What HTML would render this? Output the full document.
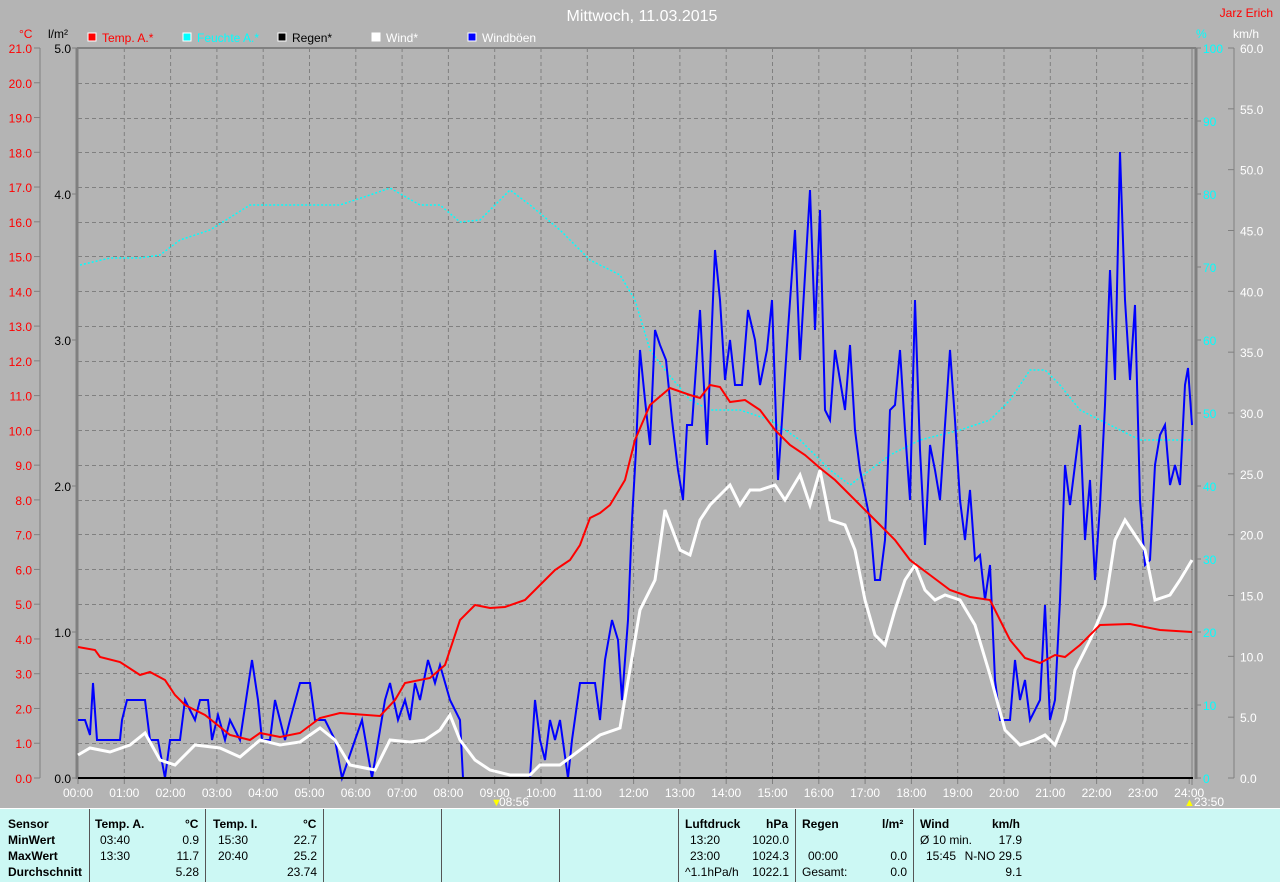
<!DOCTYPE html>
<html><head><meta charset="utf-8"><style>
body{margin:0;width:1280px;height:881px;overflow:hidden;background:#b4b4b4;font-family:"Liberation Sans",sans-serif;}
svg{position:absolute;left:0;top:0}
.tb{position:absolute;left:0;top:808px;width:1280px;height:73px;background:#ccf8f4;border-top:1px solid #fff;font-size:12px;}
.tb div{position:absolute;white-space:nowrap}
.b{font-weight:bold}
.sep{position:absolute;top:0;width:1px;height:73px;background:#555}
</style></head><body>
<svg width="1280" height="808" xmlns="http://www.w3.org/2000/svg" font-family="Liberation Sans, sans-serif" font-size="12">
<text x="642" y="21" fill="#fff" font-size="16" text-anchor="middle">Mittwoch, 11.03.2015</text>
<text x="1273" y="17" fill="#f00" text-anchor="end">Jarz Erich</text>
<text x="19" y="38" fill="#f00">°C</text>
<text x="48" y="38" fill="#000">l/m²</text>
<text x="1196" y="38" fill="#0ff">%</text>
<text x="1233" y="38" fill="#fff">km/h</text>
<rect x="88" y="33" width="8" height="8" fill="#f00" stroke="#fff"/><text x="102" y="42" fill="#f00">Temp. A.*</text>
<rect x="183" y="33" width="8" height="8" fill="#0ff" stroke="#fff"/><text x="197" y="42" fill="#0ff">Feuchte A.*</text>
<rect x="278" y="33" width="8" height="8" fill="#000" stroke="#fff"/><text x="292" y="42" fill="#000">Regen*</text>
<rect x="372" y="33" width="8" height="8" fill="#fff" stroke="#fff"/><text x="386" y="42" fill="#fff">Wind*</text>
<rect x="468" y="33" width="8" height="8" fill="#00f" stroke="#fff"/><text x="482" y="42" fill="#fff">Windböen</text>
<g id="grid" stroke="#808080" stroke-dasharray="4,3" stroke-width="1">
<line x1="78" x2="1193" y1="83.5" y2="83.5"/><line x1="78" x2="1193" y1="118.5" y2="118.5"/><line x1="78" x2="1193" y1="152.5" y2="152.5"/><line x1="78" x2="1193" y1="187.5" y2="187.5"/><line x1="78" x2="1193" y1="222.5" y2="222.5"/><line x1="78" x2="1193" y1="256.5" y2="256.5"/><line x1="78" x2="1193" y1="291.5" y2="291.5"/><line x1="78" x2="1193" y1="326.5" y2="326.5"/><line x1="78" x2="1193" y1="361.5" y2="361.5"/><line x1="78" x2="1193" y1="395.5" y2="395.5"/><line x1="78" x2="1193" y1="430.5" y2="430.5"/><line x1="78" x2="1193" y1="465.5" y2="465.5"/><line x1="78" x2="1193" y1="500.5" y2="500.5"/><line x1="78" x2="1193" y1="534.5" y2="534.5"/><line x1="78" x2="1193" y1="569.5" y2="569.5"/><line x1="78" x2="1193" y1="604.5" y2="604.5"/><line x1="78" x2="1193" y1="639.5" y2="639.5"/><line x1="78" x2="1193" y1="673.5" y2="673.5"/><line x1="78" x2="1193" y1="708.5" y2="708.5"/><line x1="78" x2="1193" y1="743.5" y2="743.5"/>
</g>
<g stroke="#808080" stroke-dasharray="4,3" id="vg"></g>
<line x1="77" y1="48" x2="77" y2="779" stroke="#808080" stroke-width="3"/>
<line x1="77" y1="48" x2="1196" y1="48" y2="48" stroke="#808080" stroke-width="2"/>
<line x1="1196" y1="48" x2="1196" y2="779" stroke="#808080" stroke-width="3"/>
<line x1="1192" y1="48" x2="1192" y2="785" stroke="#808080" stroke-width="1"/>
<line x1="40" y1="48" x2="40" y2="778" stroke="#808080"/>
<line x1="1234" y1="48" x2="1234" y2="778" stroke="#808080"/>
<g id="ax" font-size="12"></g>
<polyline fill="none" stroke="#0ff" stroke-width="1.5" stroke-dasharray="2,2" points="80,265 110,258 140,258 160,255 180,240 210,230 250,205 270,205 300,205 340,205 370,195 390,188 420,205 440,205 460,222 480,220 500,200 510,190 530,205 560,230 590,260 620,275 635,300 650,350 665,370 690,400 710,410 740,410 770,420 800,440 830,470 850,485 870,470 890,455 920,440 960,430 990,420 1010,400 1030,370 1045,370 1060,385 1080,410 1100,420 1120,430 1140,440 1170,440 1192,440"/>
<polyline fill="none" stroke="#00f" stroke-width="2" points="78,720 85,720 90,735 93,683 97,740 120,740 122,720 127,700 145,700 150,740 158,740 165,778 170,740 180,740 185,700 195,720 200,700 208,700 212,740 218,715 225,740 230,720 240,740 252,660 258,700 262,740 270,740 275,700 285,740 290,720 300,683 310,683 315,720 325,720 335,740 342,778 355,740 362,720 372,778 385,700 390,683 398,720 405,700 410,720 415,683 420,700 428,660 435,683 440,665 450,700 460,720 463,778 530,778 535,700 540,740 545,760 550,720 555,740 560,720 568,778 572,740 580,683 595,683 600,720 605,660 612,620 618,640 622,700 628,620 632,520 636,450 640,350 645,400 650,445 655,330 660,345 666,360 672,420 678,470 683,500 687,425 692,425 700,310 707,445 715,250 720,300 725,380 730,340 735,385 742,385 748,310 755,340 760,385 767,350 772,300 778,480 782,420 788,330 795,230 800,360 810,190 815,330 820,210 825,410 830,420 835,350 845,410 850,345 855,430 860,470 870,520 875,580 880,580 885,540 890,410 895,405 900,350 905,430 910,500 915,300 920,450 925,545 930,445 935,470 940,500 950,350 955,420 960,500 965,540 970,490 975,560 980,555 985,600 990,565 995,680 1000,720 1010,720 1015,660 1020,700 1025,680 1030,720 1040,700 1045,605 1050,720 1055,700 1060,600 1065,465 1070,505 1075,465 1080,425 1085,540 1090,480 1095,580 1100,505 1105,405 1110,270 1115,380 1120,152 1125,300 1130,380 1135,305 1140,500 1145,565 1150,560 1155,465 1160,435 1165,425 1170,485 1175,465 1180,485 1185,385 1188,368 1192,425"/>
<polyline fill="none" stroke="#fff" stroke-width="3" points="78,755 90,748 110,752 130,745 145,733 160,760 175,765 195,745 220,748 240,757 260,740 280,745 300,742 320,728 335,740 350,765 375,770 390,740 410,742 425,740 440,730 450,715 460,740 475,760 490,770 510,775 530,775 540,765 560,765 580,750 600,735 620,728 640,610 655,580 665,510 680,550 690,555 700,520 710,505 720,495 730,485 740,505 750,490 760,490 775,485 785,500 800,475 810,505 820,470 830,520 845,525 855,550 865,600 875,635 885,645 895,610 905,580 915,565 925,590 935,600 945,595 960,600 975,625 990,675 1005,730 1020,745 1035,740 1045,735 1055,745 1065,720 1075,670 1090,640 1105,605 1115,540 1125,520 1135,535 1145,550 1155,600 1170,595 1180,580 1192,560"/>
<polyline fill="none" stroke="#f00" stroke-width="2" points="78,647 95,650 100,657 120,662 140,675 150,672 165,680 175,695 185,705 205,715 230,735 250,740 260,733 280,737 300,733 320,718 340,713 380,716 395,700 405,683 430,678 445,665 460,620 475,605 490,608 505,607 525,600 540,585 555,570 570,560 580,545 590,518 600,513 610,505 625,480 635,440 650,405 670,388 690,395 700,398 710,385 720,387 730,402 745,400 760,410 775,430 790,445 805,455 820,468 835,480 850,495 865,510 880,525 895,540 910,560 930,575 950,590 970,597 990,600 1010,640 1025,658 1040,663 1055,655 1065,657 1080,645 1100,625 1130,624 1160,630 1192,632"/>
<line x1="78" y1="778" x2="1193" y2="778" stroke="#000" stroke-width="2"/>
<text x="491" y="806" fill="#ff0" font-size="11">▼</text><text x="499" y="806" fill="#fff" font-size="12">08:56</text>
<text x="1184" y="806" fill="#ff0" font-size="11">▲</text><text x="1194" y="806" fill="#fff" font-size="12">23:50</text>
</svg>
<script>
var ns="http://www.w3.org/2000/svg",ax=document.getElementById('ax'),vg=document.getElementById('vg');
function t(x,y,s,c,a){var e=document.createElementNS(ns,'text');e.setAttribute('x',x);e.setAttribute('y',y);e.setAttribute('fill',c);if(a)e.setAttribute('text-anchor',a);e.textContent=s;ax.appendChild(e);}
function l(x1,y1,x2,y2){var e=document.createElementNS(ns,'line');e.setAttribute('x1',x1);e.setAttribute('y1',y1);e.setAttribute('x2',x2);e.setAttribute('y2',y2);e.setAttribute('stroke','#808080');ax.appendChild(e);}
for(var i=0;i<=21;i++){var y=778-i*730/21;t(32,y+5,i+'.0','#f00','end');l(34,y,40,y);}
for(var i=0;i<=5;i++){var y=778-i*146;t(71,y+5,i+'.0','#000','end');l(72,y,77,y);}
for(var i=0;i<=10;i++){var y=778-i*73;t(1203,y+5,i*10,'#0ff');l(1196,y,1201,y);}
for(var i=0;i<=12;i++){var y=778-i*730/12;t(1240,y+5,(i*5).toFixed(1),'#fff');l(1228,y,1234,y);}
for(var h=0;h<=24;h++){var x=78+h*46.3;if(h>0&&h<24){var e=document.createElementNS(ns,'line');e.setAttribute('x1',x);e.setAttribute('x2',x);e.setAttribute('y1',48);e.setAttribute('y2',778);vg.appendChild(e);}
l(x,778,x,784);t(x,797,(h<10?'0':'')+h+':00','#fff','middle');}
</script>
<div class="tb">
<div class="sep" style="left:89px"></div><div class="sep" style="left:205px"></div><div class="sep" style="left:323px"></div><div class="sep" style="left:441px"></div><div class="sep" style="left:559px"></div><div class="sep" style="left:678px"></div><div class="sep" style="left:795px"></div><div class="sep" style="left:913px"></div>
<div class="b" style="left:8px;top:8px">Sensor</div><div class="b" style="left:8px;top:24px">MinWert</div><div class="b" style="left:8px;top:40px">MaxWert</div><div class="b" style="left:8px;top:56px">Durchschnitt</div>
<div class="b" style="left:95px;top:8px">Temp. A.</div><div class="b" style="left:185px;top:8px">°C</div>
<div style="left:100px;top:24px">03:40</div><div style="left:100px;top:40px">13:30</div>
<div style="right:1081px;top:24px">0.9</div><div style="right:1081px;top:40px">11.7</div><div style="right:1081px;top:56px">5.28</div>
<div class="b" style="left:213px;top:8px">Temp. I.</div><div class="b" style="left:303px;top:8px">°C</div>
<div style="left:218px;top:24px">15:30</div><div style="left:218px;top:40px">20:40</div>
<div style="right:963px;top:24px">22.7</div><div style="right:963px;top:40px">25.2</div><div style="right:963px;top:56px">23.74</div>
<div class="b" style="left:685px;top:8px">Luftdruck</div><div class="b" style="left:766px;top:8px">hPa</div>
<div style="left:690px;top:24px">13:20</div><div style="left:690px;top:40px">23:00</div><div style="left:685px;top:56px">^1.1hPa/h</div>
<div style="right:491px;top:24px">1020.0</div><div style="right:491px;top:40px">1024.3</div><div style="right:491px;top:56px">1022.1</div>
<div class="b" style="left:802px;top:8px">Regen</div><div class="b" style="left:882px;top:8px">l/m²</div>
<div style="left:808px;top:40px">00:00</div><div style="left:802px;top:56px">Gesamt:</div>
<div style="right:373px;top:40px">0.0</div><div style="right:373px;top:56px">0.0</div>
<div class="b" style="left:920px;top:8px">Wind</div><div class="b" style="left:992px;top:8px">km/h</div>
<div style="left:920px;top:24px">Ø 10 min.</div><div style="left:926px;top:40px">15:45</div>
<div style="right:258px;top:24px">17.9</div><div style="right:258px;top:40px">N-NO 29.5</div><div style="right:258px;top:56px">9.1</div>
</div>
</body></html>
